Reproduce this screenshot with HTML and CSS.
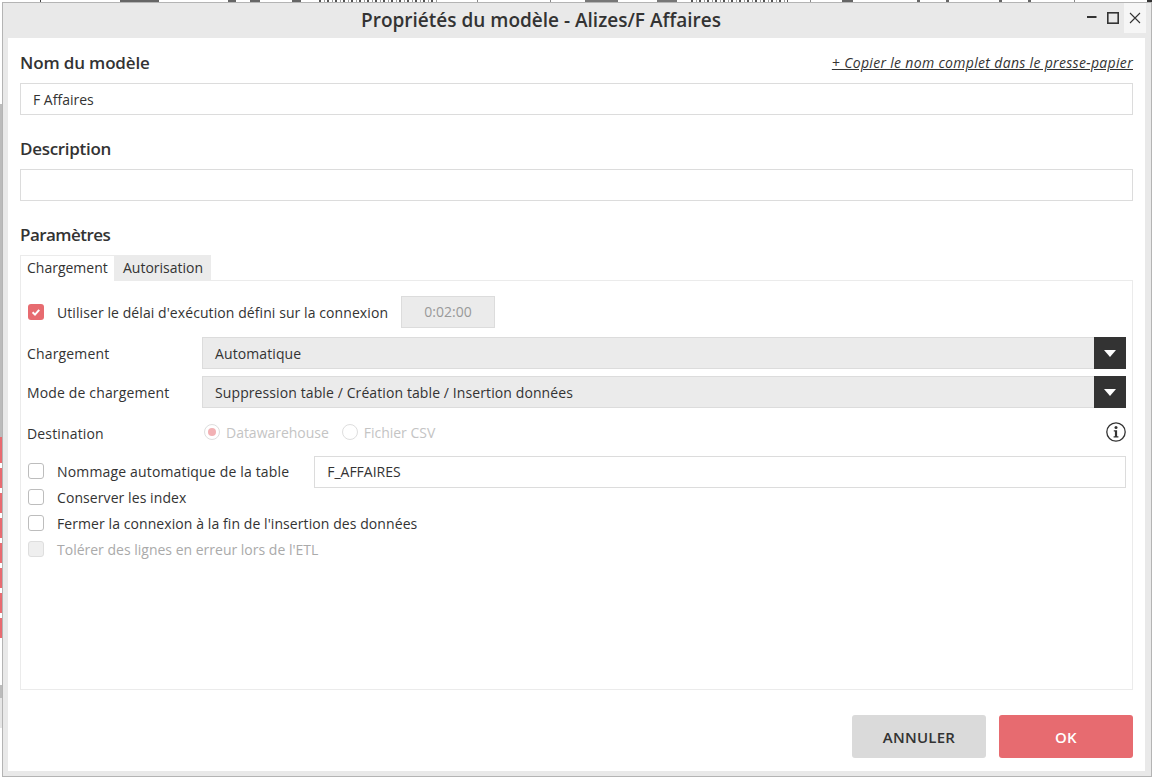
FILE: index.html
```html
<!DOCTYPE html>
<html lang="fr">
<head>
<meta charset="utf-8">
<title>Propriétés du modèle</title>
<link rel="stylesheet" href="styles.css">
</head>
<body>
<div class="backdrop" aria-hidden="true">
  <span class="bd-top"></span>
  <span class="bd-text"></span>
  <span class="bd-text t2"></span>
  <span class="bd-grey"></span>
  <span class="bd-red r1"></span><span class="bd-red r2"></span><span class="bd-red r3"></span><span class="bd-red r4"></span><span class="bd-red r5"></span><span class="bd-red r6"></span><span class="bd-red r7"></span><span class="bd-red r8"></span>
  <span class="bd-grey g2"></span>
  <span class="bd-grey g3"></span>
</div>
<div class="window">
  <header class="titlebar">
    <h1 class="title">Propriétés du modèle - Alizes/F Affaires</h1>
    <div class="controls">
      <svg class="ctl" width="20" height="22" viewBox="0 0 20 22"><rect x="5" y="9" width="9.5" height="2" fill="#333"/></svg>
      <svg class="ctl" width="22" height="22" viewBox="0 0 22 22"><rect x="5.8" y="5.8" width="10.4" height="10.4" fill="none" stroke="#333" stroke-width="1.6"/></svg>
      <div class="close"><svg width="22" height="30" viewBox="0 0 22 30"><path d="M6 10l10 10M16 10L6 20" fill="none" stroke="#333" stroke-width="1.1"/></svg></div>
    </div>
  </header>
  <main class="body">
    <div class="head-row">
      <h2 class="h">Nom du modèle</h2>
      <a class="copy">+ Copier le nom complet dans le presse-papier</a>
    </div>
    <div class="input">F Affaires</div>
    <h2 class="h h-desc">Description</h2>
    <div class="input"></div>
    <h2 class="h h-param">Paramètres</h2>
    <div class="tabs">
      <div class="tab active">Chargement</div>
      <div class="tab">Autorisation</div>
    </div>
    <section class="panel">
      <div class="row-check first">
        <span class="check on"><svg width="16" height="16" viewBox="0 0 16 16"><path d="M4.6 8.2l2.4 2.4 4.2-4.8" fill="none" stroke="#fff" stroke-width="2"/></svg></span>
        <span class="clabel">Utiliser le délai d'exécution défini sur la connexion</span>
        <div class="time">0:02:00</div>
      </div>
      <div class="row-select s1">
        <span class="flabel">Chargement</span>
        <div class="select"><span class="sval">Automatique</span><span class="arrow"><i></i></span></div>
      </div>
      <div class="row-select s2">
        <span class="flabel">Mode de chargement</span>
        <div class="select"><span class="sval">Suppression table / Création table / Insertion données</span><span class="arrow"><i></i></span></div>
      </div>
      <div class="row-dest">
        <span class="flabel">Destination</span>
        <div class="radios">
          <span class="radio on"><i></i></span><span class="rlabel">Datawarehouse</span>
          <span class="radio r-second"></span><span class="rlabel">Fichier CSV</span>
        </div>
        <svg class="info" width="20" height="20" viewBox="0 0 20 20"><circle cx="10" cy="10" r="9.2" fill="none" stroke="#333" stroke-width="1.3"/><circle cx="10" cy="5.6" r="1.5" fill="#333"/><path d="M7.8 8.3h3.3v6h1.3v1.3H7.6v-1.3h1.3V9.6H7.8z" fill="#333"/></svg>
      </div>
      <div class="row-check nom">
        <span class="check"></span>
        <span class="clabel">Nommage automatique de la table</span>
        <div class="input table">F_AFFAIRES</div>
      </div>
      <div class="row-check c1"><span class="check"></span><span class="clabel">Conserver les index</span></div>
      <div class="row-check c1"><span class="check"></span><span class="clabel">Fermer la connexion à la fin de l'insertion des données</span></div>
      <div class="row-check c1 off"><span class="check dis"></span><span class="clabel">Tolérer des lignes en erreur lors de l'ETL</span></div>
    </section>
    <footer class="actions">
      <button class="btn cancel">ANNULER</button>
      <button class="btn ok">OK</button>
    </footer>
  </main>
</div>
</body>
</html>
```
FILE: styles.css
```css
* { box-sizing: border-box; }
html, body { margin: 0; height: 100%; }
body {
  width: 1152px; height: 778px; overflow: hidden; position: relative;
  background: #fff; padding: 2px 0 0 2px;
  font-family: "Open Sans", "Noto Sans", sans-serif; font-size: 14px; color: #333;
}
.backdrop { position: absolute; inset: 0; }
.bd-top {
  position: absolute; left: 0; top: 0; width: 1152px; height: 2px;
  background: linear-gradient(90deg,
    #fff 0 40px, #444 40px 41px, #fff 41px 120px, #666 120px 159px, #fff 159px 228px,
    #666 228px 236px, #fff 236px 250px, #666 250px 260px, #fff 260px 292px, #666 292px 301px,
    #fff 301px 477px, #888 477px 478px, #fff 478px 550px, #888 550px 551px, #fff 551px 585px,
    #777 585px 618px, #fff 618px 657px, #777 657px 677px, #fff 677px 810px, #888 810px 811px,
    #fff 811px 842px, #666 842px 853px, #fff 853px 917px, #666 917px 920px, #fff 920px 946px,
    #666 946px 949px, #fff 949px 999px, #666 999px 1002px, #fff 1002px 1028px, #666 1028px 1031px,
    #fff 1031px 1074px, #888 1074px 1075px, #fff 1075px 1147px, #333 1147px 1152px);
}
.bd-text {
  position: absolute; left: 319px; top: 0; width: 120px; height: 2px;
  background: repeating-linear-gradient(90deg, #555 0 2px, #fff 2px 5px, #999 5px 6px, #fff 6px 8px);
}
.t2 { left: 691px; width: 97px; }
.bd-red { position: absolute; left: 0; width: 2px; height: 20px; background: #e86a70; }
.r1 { top: 437px; height: 26px; } .r2 { top: 468px; } .r3 { top: 493px; } .r4 { top: 518px; }
.r5 { top: 543px; } .r6 { top: 568px; } .r7 { top: 593px; } .r8 { top: 618px; }
.bd-grey { position: absolute; left: 0; top: 104px; width: 2px; height: 333px; background: #bbb; }
.g2 { top: 685px; height: 13px; }
.g3 { top: 698px; height: 30px; background: #e6e6e6; }

.window {
  position: relative; width: 1150px; height: 775px;
  border: 1px solid #b4b4b4; background: #e9e9e9;
  display: flex; flex-direction: column;
}
.titlebar { height: 35px; flex: none; position: relative; display: flex; align-items: center; justify-content: center; padding-right: 72px; }
.title { margin: 0; font-size: 19px; font-weight: 600; line-height: 35px; color: #333; }
.controls { position: absolute; right: 5px; top: 0; display: flex; align-items: flex-start; }
.ctl { margin-top: 4px; }
.close { width: 22px; height: 30px; background: #f6f6f6; }
.close svg { display: block; }
.body { flex: 1; margin: 0 6px 5px 5px; background: #fff; padding: 0 12px; display: flex; flex-direction: column; }
.head-row { display: flex; justify-content: space-between; align-items: center; height: 45px; padding-top: 4px; }
.h { margin: 0; font-size: 17px; font-weight: 600; line-height: 22px; color: #333; letter-spacing: -0.15px; }
.copy { font-size: 14px; font-style: italic; text-decoration: underline; color: #333; letter-spacing: 0.32px; }
.input {
  height: 32px; border: 1px solid #dcdcdc; background: #fff; padding: 0 12px;
  line-height: 31px; font-size: 14px; color: #333;
}
.h-desc { margin: 23px 0 9px; letter-spacing: -0.3px; }
.h-param { margin: 23px 0 10px; letter-spacing: -0.55px; }
.tabs { display: flex; height: 26px; margin-top: -1px; position: relative; z-index: 1; }
.tab { padding: 0 8px; line-height: 25px; background: #ebebeb; width: 96px; }
.tab.active { width: 95px; background: #fff; border: 1px solid #ebebeb; border-bottom: 0; padding: 0 6px; line-height: 23px; }
.panel { height: 410px; border: 1px solid #ebebeb; margin-top: -1px; padding: 15px 6px 0 6px; }
.row-check { display: flex; align-items: center; }
.first { height: 32px; }
.check { width: 16px; height: 16px; flex: none; border: 1px solid #bdbdbd; border-radius: 3px; margin: 0 13px 0 1px; background: #fff; }
.check.on { background: #e76b70; border: 0; }
.check svg { display: block; }
.check.dis { background: #efefef; border-color: #dedede; }
.clabel { letter-spacing: 0.08px; white-space: nowrap; }
.off .clabel { letter-spacing: 0; }
.time {
  margin-left: 13px; width: 94px; height: 32px; background: #ebebeb; border: 1px solid #dcdcdc;
  line-height: 30px; text-align: center; color: #999;
}
.row-select { display: flex; align-items: center; height: 32px; }
.s1 { margin-top: 9px; } .s2 { margin-top: 7px; }
.flabel { width: 175px; flex: none; letter-spacing: 0.15px; }
.select { flex: 1; height: 32px; background: #ebebeb; border: 1px solid #dcdcdc; border-right: 0; display: flex; align-items: center; justify-content: space-between; padding-left: 12px; }
.sval { letter-spacing: 0.1px; }
.arrow { width: 32px; height: 32px; margin: -1px 0; background: #333; display: flex; align-items: center; justify-content: center; }
.arrow i { width: 0; height: 0; border: 6px solid transparent; border-top: 7px solid #fff; border-bottom: 0; }
.row-dest { display: flex; align-items: center; height: 20px; margin-top: 14px; }
.row-dest .flabel { padding-top: 2px; }
.radios { display: flex; align-items: center; flex: 1; margin-left: 2px; color: #c4c4c4; }
.radio { width: 16px; height: 16px; border: 1px solid #dedede; border-radius: 50%; display: flex; align-items: center; justify-content: center; flex: none; }
.radio i { width: 8px; height: 8px; border-radius: 50%; background: #f2b1b4; }
.rlabel { margin-left: 6px; letter-spacing: -0.02px; }
.r-second { margin-left: 13px; }
.info { flex: none; }
.nom { height: 32px; margin-top: 14px; }
.nom .check, .nom .clabel { margin-bottom: 2px; }
.nom .clabel { letter-spacing: 0.16px; }
.input.table { margin-left: 25px; flex: 1; line-height: 30px; }
.c1 { height: 26px; }
.nom + .c1 { margin-top: -4px; }
.off { color: #aaa; }
.actions { display: flex; justify-content: flex-end; gap: 13px; margin-top: 25px; }
.btn { width: 134px; height: 43px; border: 0; border-radius: 3px; font-family: inherit; font-size: 15px; font-weight: 600; letter-spacing: 0.25px; }
.cancel { background: #dadada; color: #333; }
.ok { background: #e76b70; color: #fff; }
```
